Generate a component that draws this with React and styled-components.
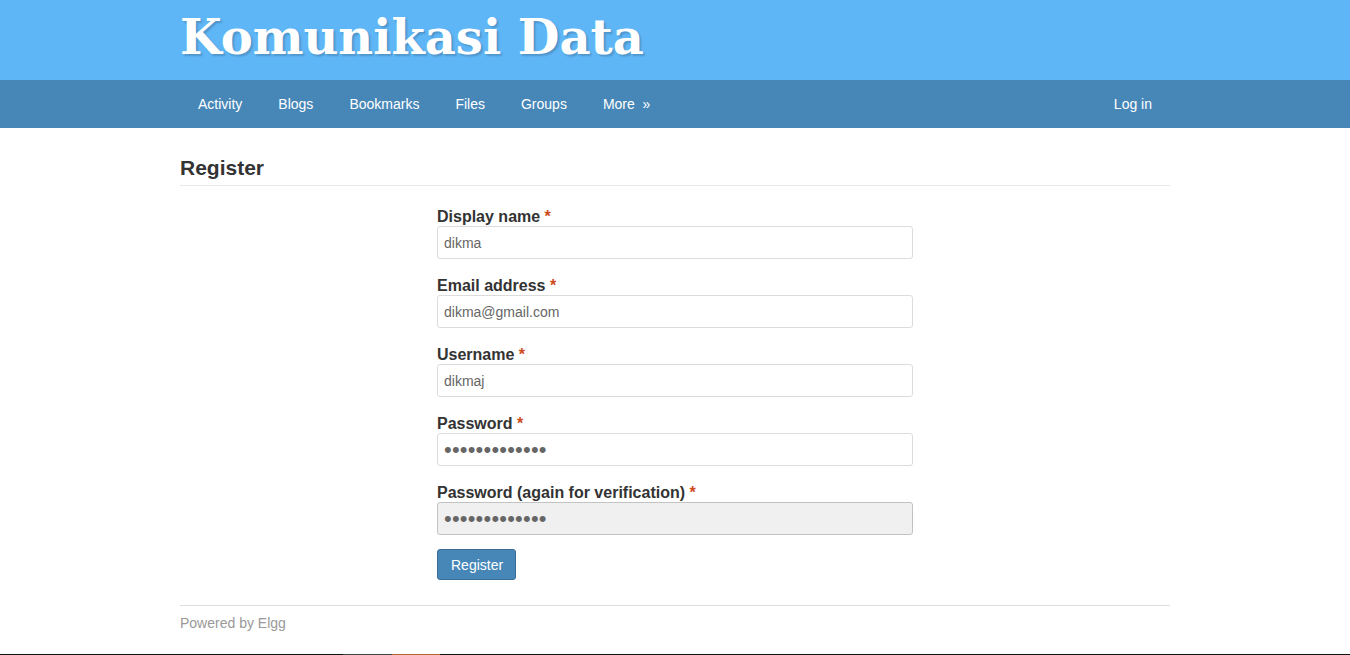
import React from "react";
import styled, { createGlobalStyle } from "styled-components";

const GlobalStyle = createGlobalStyle`
  html, body {
    margin: 0;
    padding: 0;
    background: #fff;
  }
  body {
    font-family: "Liberation Sans", Arial, sans-serif;
    font-size: 14px;
    color: #333;
  }
  * {
    box-sizing: border-box;
  }
`;

const Page = styled.div`
  display: flex;
  flex-direction: column;
  min-height: 100vh;
`;

const Header = styled.div`
  background: #5fb6f6;
  height: 80px;
`;

const Inner = styled.div`
  width: 990px;
  margin: 0 auto;
`;

const SiteTitle = styled.h1`
  margin: 0;
  padding-top: 6px;
  font-family: "DejaVu Serif", Georgia, serif;
  font-weight: bold;
  font-size: 48px;
  line-height: 62px;
  color: #fff;
  text-shadow: 2px 2px 2px rgba(0, 0, 0, 0.18);
`;

const Navbar = styled.div`
  background: #4787b8;
  height: 48px;
`;

const NavInner = styled(Inner)`
  display: flex;
  justify-content: space-between;
`;

const NavList = styled.div`
  display: flex;
`;

const NavLink = styled.a`
  display: block;
  padding: 0 18px;
  line-height: 48px;
  color: #fff;
  font-size: 14px;
  text-decoration: none;
`;

const Main = styled(Inner)`
  flex: 1;
  padding-top: 28px;
`;

const Title = styled.h2`
  margin: 0;
  font-size: 21px;
  line-height: 24px;
  font-weight: bold;
  color: #333;
  padding-bottom: 5px;
  border-bottom: 1px solid #e8e8e8;
`;

const Form = styled.form`
  width: 476px;
  margin: 0 auto;
  padding-top: 20px;
`;

const Field = styled.div`
  margin-bottom: 16px;
`;

const Label = styled.label`
  display: block;
  padding-top: 1px;
  font-size: 16px;
  font-weight: bold;
  line-height: 19px;
  color: #333;
`;

const Required = styled.span`
  color: #cf4a1c;
`;

const Input = styled.input`
  display: block;
  width: 100%;
  height: 33px;
  padding: 5px 6px;
  font-family: "Liberation Sans", Arial, sans-serif;
  font-size: ${(p) => (p.type === "password" ? "22px" : "14px")};
  letter-spacing: ${(p) => (p.type === "password" ? "0.2px" : "normal")};
  color: #666;
  border: 1px solid ${(p) => (p.$focused ? "#c2c2c2" : "#dcdcdc")};
  border-radius: 3px;
  background: ${(p) => (p.$focused ? "#f0f0f0" : "#fff")};
  outline: none;
`;

const Button = styled.button`
  margin-top: -2px;
  height: 31px;
  padding: 0 12px 0 13px;
  font-family: "Liberation Sans", Arial, sans-serif;
  font-size: 14px;
  color: #fff;
  background: #4787b8;
  border: 1px solid #3a6d96;
  border-radius: 3px;
`;

const Footer = styled(Inner)`
  margin-top: 21px;
  border-top: 1px solid #dedede;
  padding: 9px 0 23px;
  color: #999;
  font-size: 14px;
`;

const Taskbar = styled.div`
  display: flex;
  height: 1px;
  background: #111;
`;

const TaskSeg = styled.div`
  width: ${(p) => p.$w}px;
  background: ${(p) => p.$c};
`;

const fields = [
  { label: "Display name", value: "dikma", type: "text" },
  { label: "Email address", value: "dikma@gmail.com", type: "text" },
  { label: "Username", value: "dikmaj", type: "text" },
  { label: "Password", value: "dikmaj1234567", type: "password" },
  {
    label: "Password (again for verification)",
    value: "dikmaj1234567",
    type: "password",
    focused: true,
  },
];

export default function App() {
  return (
    <Page>
      <GlobalStyle />
      <Header>
        <Inner>
          <SiteTitle>Komunikasi Data</SiteTitle>
        </Inner>
      </Header>
      <Navbar>
        <NavInner>
          <NavList>
            <NavLink>Activity</NavLink>
            <NavLink>Blogs</NavLink>
            <NavLink>Bookmarks</NavLink>
            <NavLink>Files</NavLink>
            <NavLink>Groups</NavLink>
            <NavLink>More &nbsp;»</NavLink>
          </NavList>
          <NavList>
            <NavLink>Log in</NavLink>
          </NavList>
        </NavInner>
      </Navbar>
      <Main>
        <Title>Register</Title>
        <Form onSubmit={(e) => e.preventDefault()}>
          {fields.map((f) => (
            <Field key={f.label}>
              <Label>
                {f.label} <Required>*</Required>
              </Label>
              <Input
                type={f.type}
                defaultValue={f.value}
                $focused={f.focused}
                readOnly
              />
            </Field>
          ))}
          <Button type="submit">Register</Button>
        </Form>
      </Main>
      <Footer>Powered by Elgg</Footer>
      <Taskbar>
        <TaskSeg $w={343} $c="#111" />
        <TaskSeg $w={49} $c="#444" />
        <TaskSeg $w={48} $c="#b3692a" />
      </Taskbar>
    </Page>
  );
}
